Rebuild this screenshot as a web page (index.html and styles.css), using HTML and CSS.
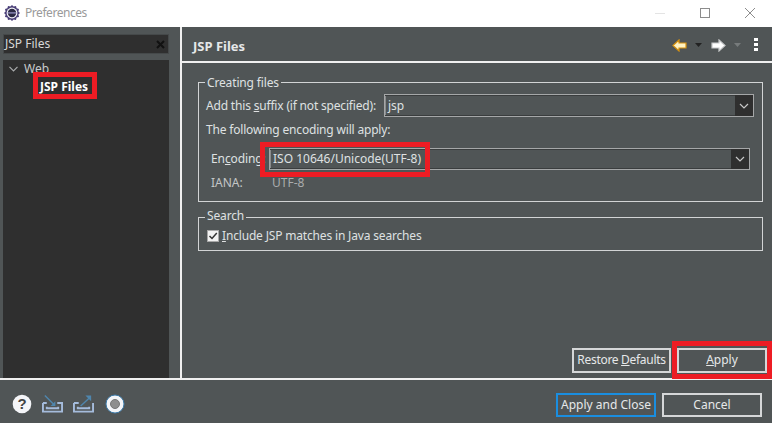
FILE: index.html
```html
<!DOCTYPE html>
<html lang="en">
<head>
<meta charset="utf-8">
<title>Preferences</title>
<link rel="stylesheet" href="styles.css">
</head>
<body>
<div class="window">
  <header class="titlebar">
    <svg class="app-icon" width="16" height="16" viewBox="0 0 16 16"><path d="M8 0l1.600 1.600L12 1l.6 2.200L15 4l-.6 2.400L16 8l-1.600 1.600L15 12l-2.400.6L12 15l-2.400-.6L8 16l-1.600-1.600L4 15l-.6-2.400L1 12l.6-2.400L0 8l1.600-1.600L1 4l2.400-.8L4 1l2.400.6z" fill="#4a3f78"/><circle cx="8" cy="8" r="5.400" fill="#f4f4f8"/><circle cx="8" cy="8" r="4.200" fill="#2c2a44"/><rect x="3.800" y="7.200" width="8.400" height="1.400" fill="#8d8ab8"/></svg>
    <span class="title">Preferences</span>
    <div class="winctl">
      <svg width="12" height="12" viewBox="0 0 12 12"><path d="M1 6.500h10" stroke="#e4e4e4" fill="none"/></svg>
      <svg width="12" height="12" viewBox="0 0 12 12"><rect x="1.500" y="1.500" width="9" height="9" stroke="#8c8c8c" fill="none"/></svg>
      <svg width="12" height="12" viewBox="0 0 12 12"><path d="M1 1l10 10M11 1L1 11" stroke="#8c8c8c" fill="none"/></svg>
    </div>
  </header>
  <div class="main">
    <aside class="side">
      <div class="filter"><span>JSP Files</span><svg width="9" height="9" viewBox="0 0 9 9"><path d="M1 1l7 7M8 1L1 8" stroke="#111" stroke-width="2" fill="none"/></svg></div>
      <div class="tree">
        <div class="tree-row"><svg width="9" height="6" viewBox="0 0 9 6"><path d="M.5.8l4 4 4-4" stroke="#a9abac" stroke-width="1.200" fill="none"/></svg><span>Web</span></div>
        <div class="tree-child">JSP Files<i class="mark mark-tree"></i></div>
      </div>
    </aside>
    <section class="content">
      <div class="head">
        <h1>JSP Files</h1>
        <div class="nav">
          <svg width="15" height="13" viewBox="0 0 15 13"><path d="M7 1L1 6.500 7 12V9h7V4H7z" fill="#fff3c4" stroke="#d8920f" stroke-width="1.200"/></svg>
          <svg class="drop" width="7" height="4" viewBox="0 0 7 4"><path d="M0 0h7L3.500 4z" fill="#222"/></svg>
          <svg class="fwd" width="15" height="13" viewBox="0 0 15 13"><path d="M8 1l6 5.500L8 12V9H1V4h7z" fill="#fff" stroke="#c8cacb" stroke-width="1.200"/></svg>
          <svg class="drop" width="7" height="4" viewBox="0 0 7 4"><path d="M0 0h7L3.500 4z" fill="#777b7c"/></svg>
          <svg class="more" width="4" height="14" viewBox="0 0 4 14"><path d="M0 0h4v3H0zM0 5h4v3H0zM0 10h4v3H0z" fill="#fff"/></svg>
        </div>
      </div>
      <div class="body">
        <fieldset class="group group-files">
          <legend>Creating files</legend>
          <div class="row-suffix">
            <label>Add this <u>s</u>uffix (if not specified):</label>
            <div class="combo combo-suffix"><span>jsp</span><b class="arrow"><svg width="10" height="6" viewBox="0 0 10 6"><path d="M1 1l4 4 4-4" stroke="#c8c8c8" stroke-width="1.200" fill="none"/></svg></b></div>
          </div>
          <p class="note">The following encoding will apply:</p>
          <div class="row-enc">
            <label>En<u>c</u>oding:</label>
            <div class="combo combo-enc"><span>ISO 10646/Unicode(UTF-8)</span><b class="arrow"><svg width="10" height="6" viewBox="0 0 10 6"><path d="M1 1l4 4 4-4" stroke="#c8c8c8" stroke-width="1.200" fill="none"/></svg></b><i class="mark mark-enc"></i></div>
          </div>
          <div class="row-iana"><label>IANA:</label><span>UTF-8</span></div>
        </fieldset>
        <fieldset class="group group-search">
          <legend>Search</legend>
          <div class="check-row">
            <svg width="12" height="12" viewBox="0 0 12 12"><rect x=".5" y=".5" width="11" height="11" fill="#f2f2f2" stroke="#a8a8a8"/><path d="M2.500 6l2.500 2.500L9.800 3" stroke="#333" stroke-width="1.500" fill="none"/></svg>
            <span><u>I</u>nclude JSP matches in Java searches</span>
          </div>
        </fieldset>
        <div class="page-actions">
          <button class="btn btn-restore">Restore <u>D</u>efaults</button>
          <button class="btn btn-apply"><u>A</u>pply<i class="mark mark-apply"></i></button>
        </div>
      </div>
    </section>
  </div>
  <footer class="foot">
    <div class="tools">
      <svg width="20" height="20" viewBox="0 0 20 20"><circle cx="10" cy="10" r="9.300" fill="#f4f5f8"/><text x="10" y="15" text-anchor="middle" class="q">?</text></svg>
      <svg width="21" height="20" viewBox="0 0 22 20"><path d="M1 9v9h20V9h-5M1 9h4M5 13v1.500h12V13" stroke="#a5bcdc" stroke-width="2" fill="none"/><path d="M3 1l10 10" stroke="#4f86ad" stroke-width="1.500"/><path d="M14 7v5H9z" fill="#4f86ad"/></svg>
      <svg width="21" height="20" viewBox="0 0 22 20"><path d="M1 9v9h20V9M1 9h5M5 13v1.500h12V13" stroke="#a5bcdc" stroke-width="2" fill="none"/><path d="M8 12L18 3" stroke="#4f86ad" stroke-width="1.500"/><path d="M13 1h6v6z" fill="#4f86ad"/></svg>
      <svg class="tool-record" width="20" height="20" viewBox="0 0 20 20"><circle cx="10" cy="10" r="9" fill="#f4f5f8" stroke="#3d7cab"/><circle cx="10" cy="10" r="4.500" fill="#8e8e8e" stroke="#777"/></svg>
    </div>
    <div class="foot-actions">
      <button class="btn btn-default">Apply and Close</button>
      <button class="btn">Cancel</button>
    </div>
  </footer>
</div>
</body>
</html>
```
FILE: styles.css
```css
* { box-sizing: border-box; }
html, body { margin: 0; padding: 0; }
body { width: 772px; height: 423px; overflow: hidden; background: #505556; font: 12px/16px "Noto Sans", "Open Sans", sans-serif; color: #dfe1e2; }
.window { display: flex; flex-direction: column; height: 423px; }
.titlebar { height: 27px; flex: none; background: #fff; display: flex; align-items: center; padding: 0 0 2px 4px; }
.app-icon { flex: none; }
.title { margin-left: 5px; color: #9a9a9a; font-size: 12px; letter-spacing: -.45px; }
.winctl { margin-left: auto; display: flex; gap: 33px; padding-right: 16px; align-items: center; }
.main { height: 353px; flex: none; display: flex; border-bottom: 2px solid #f0f0f0; }
.side { width: 180px; flex: none; padding: 7px 11px 0 3px; display: flex; flex-direction: column; }
.filter { height: 20px; background: #2f2f2f; border: 1px solid #45494a; display: flex; align-items: center; justify-content: space-between; padding: 0 3px 0 1px; flex: none; color: #d8d8d8; }
.tree { margin-top: 6px; flex: 1; background: #2f2f2f; padding-top: 1px; }
.tree-row { height: 16px; display: flex; align-items: center; gap: 6px; padding-left: 6px; color: #c9cbcc; }
.tree-child { position: relative; margin-left: 37px; margin-top: 1px; width: max-content; font-weight: 700; color: #fff; line-height: 17px; }
.mark { position: absolute; border: 5px solid #ed1c24; pointer-events: none; }
.mark-tree { left: -7px; top: -6px; width: 64px; height: 27px; }
.content { flex: 1; display: flex; flex-direction: column; border-left: 2px solid #f0f0f0; }
.head { height: 36px; flex: none; display: flex; align-items: center; justify-content: space-between; border-bottom: 2px solid #f0f0f0; padding: 2px 14px 0 11px; }
h1 { margin: 1px 0 0; font-size: 13px; font-weight: 700; color: #e6e8e9; }
.nav { display: flex; align-items: center; }
.drop { margin: 0 8px; }
.fwd { margin-left: 1px; }
.more { margin-left: 5px; }
.body { flex: 1; display: flex; flex-direction: column; padding: 12px 5px 5px 16px; position: relative; }
.group { margin: 0 4px 0 0; padding: 0; border: 1px solid #d2d4d5; min-width: 0; }
.group legend { padding: 0 2px; line-height: 14px; color: #dfe1e2; letter-spacing: -.15px; }
.group-files { height: 127px; padding: 5px 8px 0 7px; }
.group-files legend { margin-left: -1px; position: relative; top: 1px; }
.group-search { height: 41px; margin-top: 8px; padding: 4px 7px 0 8px; }
.group-search legend { margin-left: -2px; position: relative; top: -1px; }
.row-suffix { display: flex; align-items: center; height: 23px; }
.row-suffix label { width: 178px; flex: none; white-space: nowrap; letter-spacing: -.18px; }
.combo { position: relative; display: flex; align-items: center; height: 23px; border: 1px solid #a5a7a8; box-shadow: inset 0 1px #3a3d3e, inset 0 -1px #3a3d3e, inset 1px 0 #8a8c8d; background: #505556; }
.combo span { padding-left: 3px; }
.combo-suffix { width: 370px; }
.note { margin: 5px 0 0; height: 17px; letter-spacing: -.18px; }
.row-enc { display: flex; align-items: center; margin-top: 9px; padding-left: 5px; }
.row-enc label { width: 58px; flex: none; letter-spacing: -.1px; }
.combo-enc { width: 481px; height: 22px; }
.arrow { margin-left: auto; width: 18px; align-self: stretch; background: #2f2f2f; display: flex; align-items: center; justify-content: center; }
.mark-enc { left: -10px; top: -7px; width: 170px; height: 35px; }
.row-iana { display: flex; margin-top: 5px; padding-left: 5px; color: #c4c6c7; }
.row-iana label { width: 61px; flex: none; }
.row-iana span { color: #a9acad; }
.check-row { display: flex; align-items: center; gap: 3px; height: 16px; letter-spacing: -.17px; }
.page-actions { margin-top: auto; display: flex; justify-content: flex-end; gap: 6px; }
.btn { position: relative; font: inherit; color: #e6e8e9; background: #505556; border: 2px solid #d5d7d8; height: 25px; padding: 0 0 1px; }
.btn-restore { width: 99px; letter-spacing: -.3px; }
.btn-apply { width: 90px; }
.mark-apply { left: -7px; top: -9px; width: 100px; height: 38px; }
.foot { flex: 1; display: flex; align-items: center; justify-content: space-between; padding: 0 10px 0 12px; }
.tools { display: flex; gap: 10px; align-items: center; padding-top: 4px; }
.tool-record { margin-left: 1px; }
.q { font: 700 15px "Liberation Sans", sans-serif; fill: #444; }
.foot-actions { display: flex; gap: 6px; padding-top: 7px; }
.foot-actions .btn { width: 100px; height: 24px; }
.btn-default { border-color: #1a8ee0; }
```
